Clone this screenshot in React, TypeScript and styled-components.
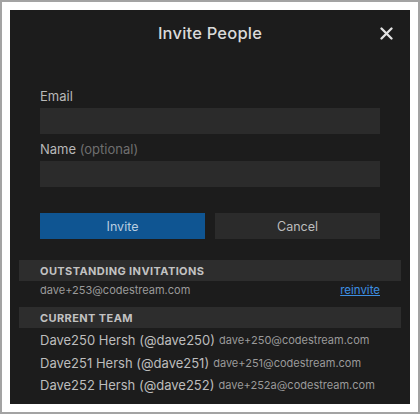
import React from "react";
import styled, { createGlobalStyle } from "styled-components";

const Global = createGlobalStyle`
  html, body { margin: 0; padding: 0; background: #fff; }
  * { box-sizing: border-box; }
`;

const Frame = styled.div`
  width: 420px;
  height: 414px;
  border: 2px solid #a3a3a3;
  padding: 8px;
  background: #fff;
  font-family: Inter, "Noto Sans", sans-serif;
`;

const Panel = styled.div`
  width: 100%;
  height: 100%;
  background: #1c1c1c;
  display: flex;
  flex-direction: column;
  overflow: hidden;
`;

const Header = styled.div`
  position: relative;
  height: 46px;
  display: flex;
  align-items: center;
  justify-content: center;
`;

const Title = styled.h1`
  margin: 0;
  font-size: 16.5px;
  font-weight: 500;
  color: #dadada;
  letter-spacing: 0.2px;
`;

const Close = styled.button`
  position: absolute;
  right: 16px;
  top: 16px;
  width: 15px;
  height: 15px;
  padding: 0;
  border: none;
  background: none;
  display: flex;
  align-items: center;
  justify-content: center;
  cursor: pointer;
`;

const Form = styled.div`
  padding: 32px 30px 0;
  display: flex;
  flex-direction: column;
`;

const Label = styled.label<{ $gap?: number }>`
  display: block;
  height: 16px;
  line-height: 16px;
  font-size: 13px;
  color: #b8b8b8;
  margin-top: ${(p) => p.$gap ?? 0}px;
  margin-bottom: 4px;
`;

const Optional = styled.span`
  color: #6f6f6f;
`;

const Input = styled.input`
  height: 26px;
  width: 100%;
  border: none;
  outline: none;
  background: #2b2b2b;
  color: #ddd;
  padding: 0 8px;
  font-family: inherit;
  font-size: 13px;
`;

const Buttons = styled.div`
  margin-top: 26px;
  display: grid;
  grid-template-columns: 1fr 1fr;
  gap: 10px;
`;

const Button = styled.button<{ $primary?: boolean }>`
  height: 26px;
  border: none;
  font-family: inherit;
  font-size: 12.5px;
  color: ${(p) => (p.$primary ? "#b9cde0" : "#bdbdbd")};
  background: ${(p) => (p.$primary ? "#0f5592" : "#2b2b2b")};
  cursor: pointer;
`;

const SectionBar = styled.div<{ $top: number }>`
  margin: ${(p) => p.$top}px 9px 0;
  height: 21px;
  background: #2d2d2d;
  padding-left: 21px;
  display: flex;
  align-items: center;
  font-size: 11px;
  font-weight: 700;
  letter-spacing: 0.4px;
  color: #c2c2c2;
  text-transform: uppercase;
`;

const InviteRow = styled.div`
  height: 18px;
  margin: 0 30px 6px;
  display: flex;
  align-items: center;
  justify-content: space-between;
`;

const Email = styled.span`
  font-size: 11px;
  color: #9a9a9a;
`;

const Reinvite = styled.a`
  font-size: 11.5px;
  color: #3d8fe3;
  text-decoration: underline;
  cursor: pointer;
`;

const TeamList = styled.div`
  margin-top: 1px;
  padding: 0 30px;
  display: flex;
  flex-direction: column;
`;

const Member = styled.div`
  height: 22.5px;
  display: flex;
  align-items: center;
  gap: 4px;
  white-space: nowrap;
`;

const MemberName = styled.span`
  font-size: 13px;
  color: #bdbdbd;
`;

const invites = ["dave+253@codestream.com"];
const team = [
  { name: "Dave250 Hersh", handle: "dave250", email: "dave+250@codestream.com" },
  { name: "Dave251 Hersh", handle: "dave251", email: "dave+251@codestream.com" },
  { name: "Dave252 Hersh", handle: "dave252", email: "dave+252a@codestream.com" },
];

export default function App() {
  return (
    <>
      <Global />
      <Frame>
        <Panel>
          <Header>
            <Title>Invite People</Title>
            <Close aria-label="Close">
              <svg width="13" height="13" viewBox="0 0 13 13">
                <path d="M1.5 1.5 L11.5 11.5 M11.5 1.5 L1.5 11.5" stroke="#e2e2e2" strokeWidth="2.3" strokeLinecap="round" />
              </svg>
            </Close>
          </Header>
          <Form>
            <Label>Email</Label>
            <Input />
            <Label $gap={7}>
              Name <Optional>(optional)</Optional>
            </Label>
            <Input />
            <Buttons>
              <Button $primary>Invite</Button>
              <Button>Cancel</Button>
            </Buttons>
          </Form>
          <SectionBar $top={21}>Outstanding Invitations</SectionBar>
          {invites.map((e) => (
            <InviteRow key={e}>
              <Email>{e}</Email>
              <Reinvite>reinvite</Reinvite>
            </InviteRow>
          ))}
          <SectionBar $top={2}>Current Team</SectionBar>
          <TeamList>
            {team.map((m) => (
              <Member key={m.handle}>
                <MemberName>
                  {m.name} (@{m.handle})
                </MemberName>
                <Email>{m.email}</Email>
              </Member>
            ))}
          </TeamList>
        </Panel>
      </Frame>
    </>
  );
}
